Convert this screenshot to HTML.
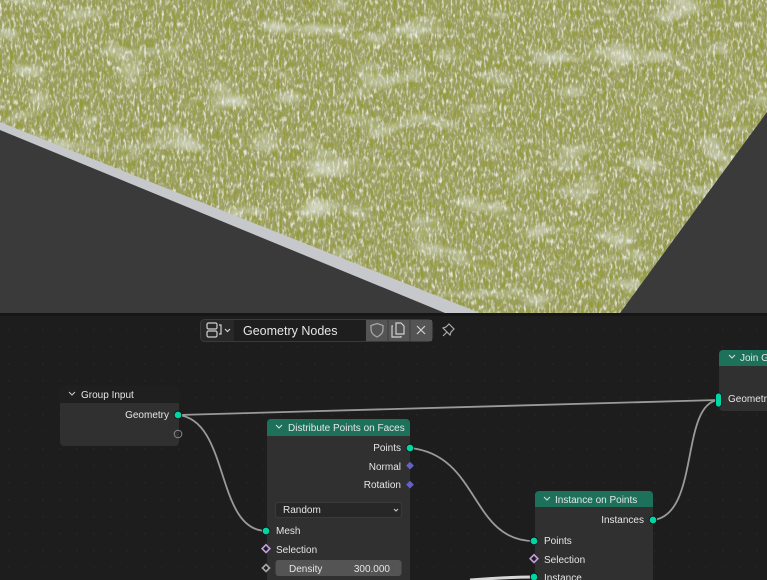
<!DOCTYPE html>
<html><head><meta charset="utf-8"><style>
html,body{margin:0;padding:0;background:#1d1d1d;overflow:hidden}
svg{display:block}
text{font-family:"Liberation Sans",sans-serif;fill:#e6e6e6;font-size:10px}
</style></head><body>
<svg width="767" height="580" viewBox="0 0 767 580" xmlns="http://www.w3.org/2000/svg">
<defs>
<filter id="gr" x="0" y="0" width="100%" height="100%">
<feTurbulence type="fractalNoise" baseFrequency="0.3 0.1" numOctaves="3" seed="3" result="n"/>
<feColorMatrix in="n" type="matrix" values="0 0 0 0 0.30  0 0 0 0 0.33  0 0 0 0 0.04  0 0 0 -3 1.75" result="dark"/>
<feComposite in="dark" in2="SourceGraphic" operator="in" result="d2"/>
<feTurbulence type="fractalNoise" baseFrequency="0.45 0.18" numOctaves="2" seed="11" result="n2"/>
<feColorMatrix in="n2" type="matrix" values="0 0 0 0 0.82  0 0 0 0 0.84  0 0 0 0 0.68  0 0 0 -3 1.6" result="light"/>
<feComposite in="light" in2="SourceGraphic" operator="in" result="l2"/>
<feMerge><feMergeNode in="SourceGraphic"/><feMergeNode in="l2"/><feMergeNode in="d2"/></feMerge>
</filter>
<filter id="patch" x="0" y="0" width="100%" height="100%">
<feTurbulence type="fractalNoise" baseFrequency="0.02 0.045" numOctaves="2" seed="7" result="n"/>
<feColorMatrix in="n" type="matrix" values="0 0 0 0 0.85  0 0 0 0 0.87  0 0 0 0 0.88  0 0 0 3 -1.7"/>
<feComposite in2="SourceGraphic" operator="in"/>
</filter>
<pattern id="dots" width="17" height="17" patternUnits="userSpaceOnUse" x="8" y="6">
<rect width="1.5" height="1.5" fill="#262626"/>
</pattern>
</defs>
<rect x="0" y="0" width="767" height="313" fill="#3a3a3a"/>
<polygon points="0,0 767,0 767,108 613,313 445,313 0,130" fill="#c6c8cb"/>
<polygon points="0,0 767,0 767,112 620,313 480,313 0,122" fill="#9ea066" filter="url(#gr)"/>
<polygon points="0,0 767,0 767,112 620,313 480,313 0,122" fill="#fff" filter="url(#patch)" opacity="0.7"/>
<rect x="0" y="313" width="767" height="3" fill="#161616"/>
<rect x="0" y="316" width="767" height="264" fill="#1d1d1d"/>
<rect x="0" y="316" width="767" height="264" fill="url(#dots)"/>
<rect x="200.5" y="319.5" width="232" height="22" rx="4" fill="#282828" stroke="#3a3a3a"/>
<rect x="234" y="320" width="132" height="21" fill="#1e1e1e"/>
<rect x="366" y="320" width="66" height="21" fill="#545454"/>
<line x1="388" y1="320" x2="388" y2="341" stroke="#3d3d3d"/>
<line x1="410" y1="320" x2="410" y2="341" stroke="#3d3d3d"/>
<g fill="none" stroke="#d0d0d0" stroke-width="1.2">
<rect x="207" y="323" width="10" height="6" rx="1.5"/>
<rect x="207" y="331" width="10" height="6" rx="1.5"/>
<path d="M219 325 h2 v9 h-2"/>
<path d="M225 329 l2.5 2.5 l2.5 -2.5"/>
<path d="M377 323.5 l6 2 v4 c0 4 -3 6 -6 7.5 c-3 -1.5 -6 -3.5 -6 -7.5 v-4 z" stroke="#aaa"/>
<path d="M393 326 h-1 v11 h9 v-1 M396 323 h5 l3 3 v8 h-8 z"/>
<path d="M417 326 l8 8 M425 326 l-8 8"/>
<path d="M443 336 l4 -4 M446 327 l3 -3 l5 5 l-3 3 l-1 3 l-7 -7 z" stroke="#aaa"/>
</g>
<text x="243" y="335" style="font-size:12.5px">Geometry Nodes</text>
<g fill="none" stroke="#9a9a9a" stroke-width="1.8">
<path d="M178 415 L718 400"/>
<path d="M178 415 C230 420 215 530 266 531"/>
<path d="M410 448 C480 455 470 541 534 541"/>
<path d="M653 520 C700 515 680 405 718 400"/>
</g>
<path d="M470 580 C500 578 510 577 534 577" stroke="#d8d8d8" stroke-width="3" fill="none"/>
<rect x="60" y="386" width="119" height="60" rx="4" fill="#303030"/>
<path d="M60 403 v-13 a4 4 0 0 1 4 -4 h111 a4 4 0 0 1 4 4 v13 z" fill="#1f1f1f"/>
<path d="M69 392 l3 3 l3 -3" stroke="#ccc" fill="none"/>
<text x="81" y="398">Group Input</text>
<text x="169" y="418" text-anchor="end">Geometry</text>
<circle cx="178" cy="415" r="3.8" fill="#00d6a3" stroke="#111" stroke-width="0.8"/>
<circle cx="178" cy="434" r="3.8" fill="none" stroke="#888" stroke-width="1"/>
<rect x="267" y="419" width="143" height="170" rx="4" fill="#303030"/>
<path d="M267 436 v-13 a4 4 0 0 1 4 -4 h135 a4 4 0 0 1 4 4 v13 z" fill="#1d715b"/>
<path d="M276 425 l3 3 l3 -3" stroke="#ddd" fill="none"/>
<text x="288" y="431">Distribute Points on Faces</text>
<text x="401" y="451" text-anchor="end">Points</text>
<text x="401" y="470" text-anchor="end">Normal</text>
<text x="401" y="488" text-anchor="end">Rotation</text>
<circle cx="410" cy="448" r="3.8" fill="#00d6a3" stroke="#111" stroke-width="0.8"/>
<rect x="407" y="463" width="5.5" height="5.5" fill="#6363c7" transform="rotate(45 410 466)"/>
<rect x="407" y="482" width="5.5" height="5.5" fill="#6363c7" transform="rotate(45 410 485)"/>
<rect x="275.5" y="502.5" width="126" height="15" rx="3" fill="#272727" stroke="#3a3a3a"/>
<text x="283" y="513">Random</text>
<path d="M394 509 l2 2 l2 -2" stroke="#ccc" fill="none"/>
<text x="276" y="534">Mesh</text>
<circle cx="266" cy="531" r="3.8" fill="#00d6a3" stroke="#111" stroke-width="0.8"/>
<text x="276" y="553">Selection</text>
<rect x="263" y="546" width="5.5" height="5.5" fill="none" stroke="#c39fe0" stroke-width="1.6" transform="rotate(45 266 549)"/>
<rect x="275.5" y="560" width="126" height="16" rx="3" fill="#545454"/>
<text x="289" y="572">Density</text>
<text x="390" y="572" text-anchor="end">300.000</text>
<rect x="263.5" y="565.5" width="5" height="5" fill="none" stroke="#aaa" stroke-width="1.6" transform="rotate(45 266 568)"/>
<rect x="535" y="491" width="118" height="100" rx="4" fill="#303030"/>
<path d="M535 507 v-12 a4 4 0 0 1 4 -4 h110 a4 4 0 0 1 4 4 v12 z" fill="#1d715b"/>
<path d="M544 497 l3 3 l3 -3" stroke="#ddd" fill="none"/>
<text x="555" y="503">Instance on Points</text>
<text x="644" y="523" text-anchor="end">Instances</text>
<circle cx="653" cy="520" r="3.8" fill="#00d6a3" stroke="#111" stroke-width="0.8"/>
<text x="544" y="544">Points</text>
<circle cx="534" cy="541" r="3.8" fill="#00d6a3" stroke="#111" stroke-width="0.8"/>
<text x="544" y="563">Selection</text>
<rect x="531" y="556" width="5.5" height="5.5" fill="none" stroke="#c39fe0" stroke-width="1.6" transform="rotate(45 534 559)"/>
<text x="544" y="581">Instance</text>
<circle cx="534" cy="577" r="3.8" fill="#00d6a3" stroke="#111" stroke-width="0.8"/>
<rect x="719" y="350" width="60" height="61" rx="4" fill="#303030"/>
<path d="M719 366 v-12 a4 4 0 0 1 4 -4 h50 v16 z" fill="#1d715b"/>
<path d="M729 355 l3 3 l3 -3" stroke="#ddd" fill="none"/>
<text x="740" y="361">Join Geometry</text>
<text x="728" y="402">Geometry</text>
<rect x="715.5" y="393" width="6" height="14" rx="3" fill="#00d6a3" stroke="#111" stroke-width="0.8"/>
</svg>
</body></html>
